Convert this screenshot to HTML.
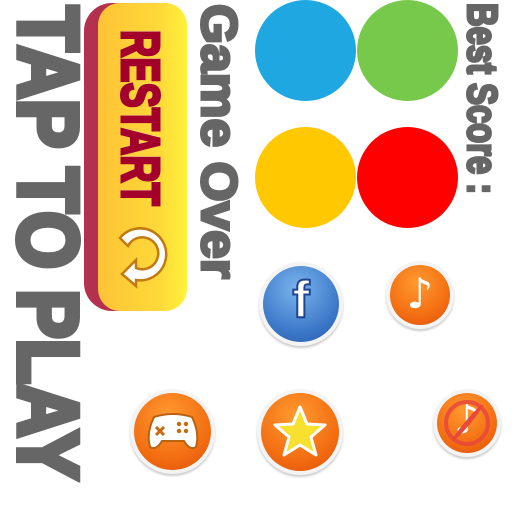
<!DOCTYPE html>
<html><head><style>
body{margin:0;width:512px;height:512px;background:#fff;position:relative;overflow:hidden;font-family:"Liberation Sans",sans-serif;}
.v{position:absolute;writing-mode:vertical-rl;font-weight:bold;color:#666;white-space:nowrap;line-height:1;transform-origin:0 0;-webkit-text-stroke:3px #666;}
.c{position:absolute;border-radius:50%;}
.btn{position:absolute;border-radius:50%;background:#f4f4f4;box-shadow:0 2px 2px #ccc;}
.btn>div{position:absolute;inset:4px;border-radius:50%;}
.or{background:radial-gradient(circle at 45% 30%,#ff9a30,#f26b10 65%,#d84c08);}
</style></head><body>
<div class="v" style="left:6px;top:6px;font-size:84px;transform:scaleY(0.88);-webkit-text-stroke:6px #666;">TAP TO PLAY</div>
<div class="v" style="left:194px;top:4px;font-size:50px;transform:scaleY(1.03);">Game Over</div>
<div class="v" style="left:461px;top:3px;font-size:42px;transform:scaleY(0.78);">Best Score :</div>

<div style="position:absolute;left:84px;top:3px;width:96px;height:308px;border-radius:28px;background:#b3304f;"></div>
<div style="position:absolute;left:98px;top:3px;width:89px;height:308px;border-radius:22px;background:linear-gradient(90deg,#fdc335,#ffd93a 70%,#fff23a);"></div>
<div class="v" style="left:113px;top:30px;font-size:54px;color:#a3002c;transform:scaleY(0.7);-webkit-text-stroke:3px #a3002c;text-shadow:-2px 0 #fff6c0;">RESTART</div>
<svg style="position:absolute;left:106px;top:218px" width="68" height="72" viewBox="0 0 68 72">
<path d="M14 20 A26 26 0 1 1 30 62 L30 68 L16 56 L30 42 L30 50 A16 16 0 1 0 22 28 Z" fill="#fff" stroke="#c07a10" stroke-width="2.5"/>
</svg>

<div class="c" style="left:255px;top:0;width:101px;height:101px;background:#1fa7e1"></div>
<div class="c" style="left:357px;top:0;width:101px;height:101px;background:#77c94b"></div>
<div class="c" style="left:255px;top:127px;width:101px;height:101px;background:#ffc800"></div>
<div class="c" style="left:357px;top:127px;width:101px;height:101px;background:#ff0000"></div>

<div class="btn" style="left:259px;top:262px;width:84px;height:84px"><div style="background:radial-gradient(circle at 45% 30%,#7ab4ec,#3b77c8 65%,#2a55a8)"></div>
<span style="position:absolute;left:0;right:0;top:8px;text-align:center;font:bold 52px 'Liberation Sans';color:#fff;-webkit-text-stroke:2px #1f4590">f</span></div>

<div class="btn" style="left:386px;top:261px;width:68px;height:68px"><div class="or"></div>
<span style="position:absolute;left:0;right:0;top:8px;text-align:center;font:bold 42px 'DejaVu Sans';color:#fff">♪</span></div>

<div class="btn" style="left:130px;top:389px;width:85px;height:85px"><div class="or"></div>
<svg style="position:absolute;left:16px;top:24px" width="54" height="38" viewBox="0 0 54 38"><path d="M8 4 Q27 -2 46 4 Q54 20 50 34 Q44 38 38 28 L16 28 Q10 38 4 34 Q0 20 8 4Z" fill="#fff" stroke="#b9620f" stroke-width="2"/><path d="M10 14 l8 8 M18 14 l-8 8" stroke="#c76a10" stroke-width="3"/><circle cx="33" cy="11" r="2.2" fill="#c76a10"/><circle cx="40" cy="11" r="2.2" fill="#c76a10"/><circle cx="33" cy="18" r="2.2" fill="#c76a10"/><circle cx="40" cy="18" r="2.2" fill="#c76a10"/></svg></div>

<div class="btn" style="left:257px;top:389px;width:86px;height:86px"><div class="or"></div>
<svg style="position:absolute;left:14px;top:14px" width="58" height="58" viewBox="0 0 58 58"><path d="M29 4 L36 21 L54 22 L40 34 L45 52 L29 42 L13 52 L18 34 L4 22 L22 21Z" fill="#f8e030" stroke="#fff" stroke-width="3" stroke-linejoin="round"/></svg></div>

<div class="btn" style="left:433px;top:389px;width:68px;height:68px"><div class="or"></div>
<span style="position:absolute;left:0;right:0;top:8px;text-align:center;font:bold 40px 'DejaVu Sans';color:#fff">♪</span>
<div style="position:absolute;left:11px;top:11px;width:38px;height:38px;border:4px solid #e84a3a;border-radius:50%;opacity:.9"></div>
<div style="position:absolute;left:32px;top:10px;width:5px;height:48px;background:#e84a3a;transform:rotate(40deg)"></div></div>
</body></html>
